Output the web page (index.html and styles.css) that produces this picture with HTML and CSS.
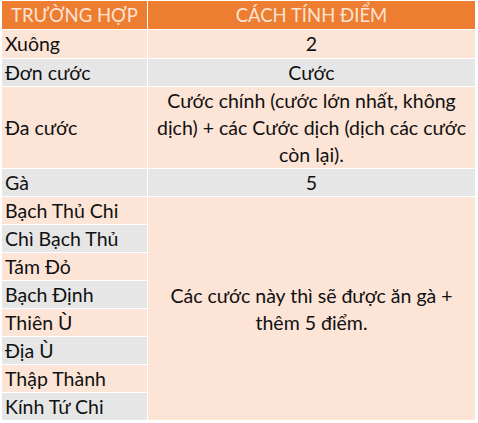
FILE: index.html
```html
<!DOCTYPE html>
<html lang="vi">
<head>
<meta charset="utf-8">
<title>Cách tính điểm</title>
<link rel="stylesheet" href="styles.css">
</head>
<body>
<table class="score">
  <thead>
    <tr>
      <th class="col-case">TRƯỜNG HỢP</th>
      <th class="col-rule">CÁCH TÍNH ĐIỂM</th>
    </tr>
  </thead>
  <tbody>
    <tr class="pink first"><td class="case">Xuông</td><td class="rule">2</td></tr>
    <tr class="grey"><td class="case">Đơn cước</td><td class="rule">Cước</td></tr>
    <tr class="pink"><td class="case">Đa cước</td><td class="rule">Cước chính (cước lớn nhất, không<br>dịch) + các Cước dịch (dịch các cước<br>còn lại).</td></tr>
    <tr class="grey"><td class="case">Gà</td><td class="rule">5</td></tr>
    <tr class="pink"><td class="case">Bạch Thủ Chi</td><td class="rule merged" rowspan="8">Các cước này thì sẽ được ăn gà +<br>thêm 5 điểm.</td></tr>
    <tr class="grey"><td class="case">Chì Bạch Thủ</td></tr>
    <tr class="pink"><td class="case">Tám Đỏ</td></tr>
    <tr class="grey"><td class="case">Bạch Định</td></tr>
    <tr class="pink"><td class="case">Thiên Ù</td></tr>
    <tr class="grey"><td class="case">Địa Ù</td></tr>
    <tr class="pink"><td class="case">Thập Thành</td></tr>
    <tr class="grey"><td class="case">Kính Tứ Chi</td></tr>
  </tbody>
</table>
</body>
</html>
```

FILE: styles.css
```css
html, body {
  margin: 0;
  padding: 0;
  background: #ffffff;
}

body {
  padding: 0 2px 0 1px;
  font-family: Lato, "Open Sans", sans-serif;
  font-size: 19.5px;
  color: #111111;
}

.score {
  border-collapse: collapse;
  width: 475px;
  table-layout: fixed;
}

.score th,
.score td {
  border: 1px solid #ffffff;
  padding: 0 3px;
  line-height: 27px;
  white-space: nowrap;
  overflow: hidden;
}

.score th {
  background: #ed7d31;
  color: #fbe4d4;
  font-size: 18.5px;
  font-weight: normal;
  text-align: center;
  line-height: 28px;
}

.first td {
  line-height: 28px;
}

.col-case {
  width: 139px;
}

.case {
  text-align: left;
}

.rule {
  text-align: center;
  vertical-align: middle;
}

.pink td {
  background: #fce4d6;
}

.grey td {
  background: #e7e6e6;
}

.pink td.merged,
.grey td.merged {
  background: #fce4d6;
}
```
